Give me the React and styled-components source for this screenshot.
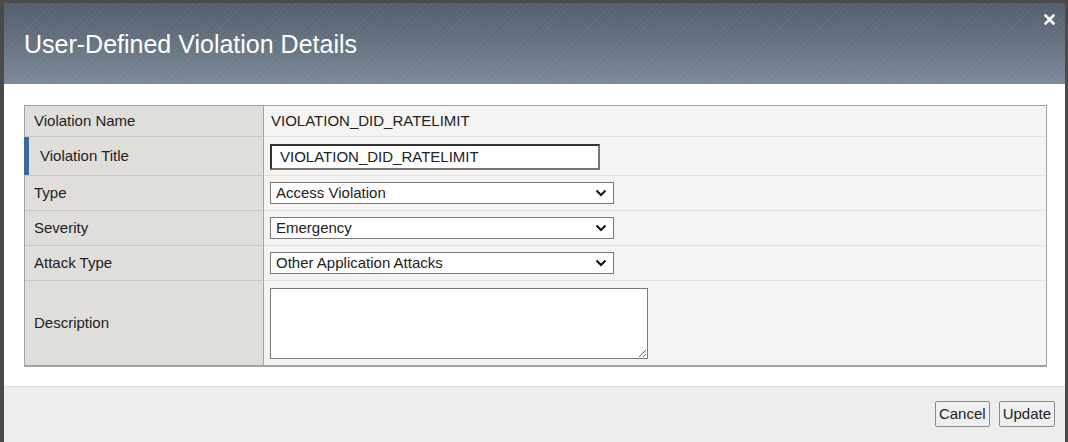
import React from 'react'
import styled, { createGlobalStyle } from 'styled-components'

const GlobalStyle = createGlobalStyle`
  html, body {
    margin: 0;
    padding: 0;
    background: #4a4a4a;
    height: 100%;
    overflow: hidden;
  }
  body {
    font-family: "Liberation Sans", Arial, sans-serif;
    font-size: 15px;
    color: #222;
  }
`

const Dialog = styled.div`
  margin: 3px 3px 0 4px;
  height: 439px;
  background: #fff;
  display: flex;
  flex-direction: column;
`

// Header
const Header = styled.div`
  position: relative;
  height: 81px;
  flex: none;
  display: flex;
  align-items: center;
  padding: 0 20px;
  background:
    repeating-linear-gradient(
      -45deg,
      rgba(255, 255, 255, 0.035) 0px,
      rgba(255, 255, 255, 0.035) 2px,
      rgba(0, 0, 0, 0) 2px,
      rgba(0, 0, 0, 0) 4px
    ),
    linear-gradient(to bottom, #525d6a 0%, #66727f 50%, #7b8898 100%);
`

const Title = styled.h1`
  margin: 1px 0 0;
  font-size: 25px;
  font-weight: normal;
  color: #fff;
`

const Close = styled.button`
  position: absolute;
  top: 11px;
  right: 10px;
  padding: 0;
  border: 0;
  background: none;
  color: #fff;
  cursor: pointer;
  display: flex;
`

// Body
const Body = styled.div`
  padding: 21px 18px 19px 20px;
  border-bottom: 1px solid #dcdcdc;
`

const Table = styled.div`
  display: grid;
  grid-template-columns: 239px 1fr;
  border: 1px solid #a3a3a3;
  border-bottom-width: 2px;
  background: #f5f4f2;
`

const Label = styled.div`
  position: relative;
  display: flex;
  align-items: center;
  height: ${p => p.h}px;
  padding: 0 0 2px ${p => (p.marked ? 15 : 9)}px;
  background: #dfdedb;
  border-right: 1px solid #a3a3a3;
  border-top: ${p => (p.first ? 0 : '1px solid #c8c7c4')};
  box-sizing: border-box;

  ${p => p.marked && `
    &::before {
      content: '';
      position: absolute;
      left: -1px;
      top: 0;
      bottom: 0;
      width: 5px;
      background: #3b6b9a;
    }
  `}
`

const Value = styled.div`
  display: flex;
  align-items: center;
  height: ${p => p.h}px;
  padding: 0 0 ${p => (p.text ? 2 : 0)}px ${p => (p.text ? 7 : 6)}px;
  border-top: ${p => (p.first ? 0 : '1px solid #e2e1de')};
  box-sizing: border-box;
`

const TextInput = styled.input`
  width: 330px;
  height: 26px;
  box-sizing: border-box;
  border: 2px solid #555;
  border-top-color: #333;
  border-left-color: #333;
  border-right-color: #777;
  border-bottom-color: #777;
  padding: 0 8px;
  margin-top: 1px;
  font: inherit;
  color: #222;
  background: #fff;
  outline: none;
`

const SelectWrap = styled.div`
  position: relative;
  width: 344px;
  height: 22px;
`

const Select = styled.select`
  appearance: none;
  width: 100%;
  height: 100%;
  box-sizing: border-box;
  border: 1px solid #7a7a7a;
  border-radius: 0;
  background: #fff;
  padding: 0 0 1px 5px;
  font: inherit;
  color: #222;
  outline: none;
`

const Chevron = styled.svg`
  position: absolute;
  right: 7px;
  top: 7px;
  pointer-events: none;
`

const TextArea = styled.textarea`
  width: 378px;
  height: 71px;
  box-sizing: border-box;
  border: 1px solid #7a7a7a;
  font: inherit;
  background: #fff;
  outline: none;
`

// Footer
const Footer = styled.div`
  flex: 1;
  background: #ededed;
  display: flex;
  justify-content: flex-end;
  align-items: flex-start;
  gap: 9px;
  padding: 14px 10px 0 0;
`

const Button = styled.button`
  height: 26px;
  padding: 0 3px 1px;
  border: 1px solid #8a8a8a;
  border-radius: 2px;
  background: #efefef;
  font: inherit;
  color: #222;
  cursor: pointer;
`

const Dropdown = ({ value }) => (
  <SelectWrap>
    <Select defaultValue={value}>
      <option>{value}</option>
    </Select>
    <Chevron width="12" height="8" viewBox="0 0 12 8">
      <path d="M1.5 1.5 L6 6 L10.5 1.5" fill="none" stroke="#111" strokeWidth="2" />
    </Chevron>
  </SelectWrap>
)

const rows = [
  { label: 'Violation Name', h: 30, text: true, content: 'VIOLATION_DID_RATELIMIT' },
  { label: 'Violation Title', h: 39, marked: true, content: <TextInput defaultValue="VIOLATION_DID_RATELIMIT" /> },
  { label: 'Type', h: 35, content: <Dropdown value="Access Violation" /> },
  { label: 'Severity', h: 35, content: <Dropdown value="Emergency" /> },
  { label: 'Attack Type', h: 35, content: <Dropdown value="Other Application Attacks" /> },
  { label: 'Description', h: 85, content: <TextArea /> },
]

export default function App() {
  return (
    <>
      <GlobalStyle />
      <Dialog>
        <Header>
          <Title>User-Defined Violation Details</Title>
          <Close aria-label="Close">
            <svg width="11" height="11" viewBox="0 0 11 11">
              <path d="M1.5 1.5 L9.5 9.5 M9.5 1.5 L1.5 9.5" stroke="#fff" strokeWidth="2.6" strokeLinecap="square" />
            </svg>
          </Close>
        </Header>

        <Body>
          <Table>
            {rows.map((r, i) => (
              <React.Fragment key={r.label}>
                <Label h={r.h} first={i === 0} marked={r.marked}>{r.label}</Label>
                <Value h={r.h} first={i === 0} text={r.text}>{r.content}</Value>
              </React.Fragment>
            ))}
          </Table>
        </Body>

        <Footer>
          <Button>Cancel</Button>
          <Button>Update</Button>
        </Footer>
      </Dialog>
    </>
  )
}
